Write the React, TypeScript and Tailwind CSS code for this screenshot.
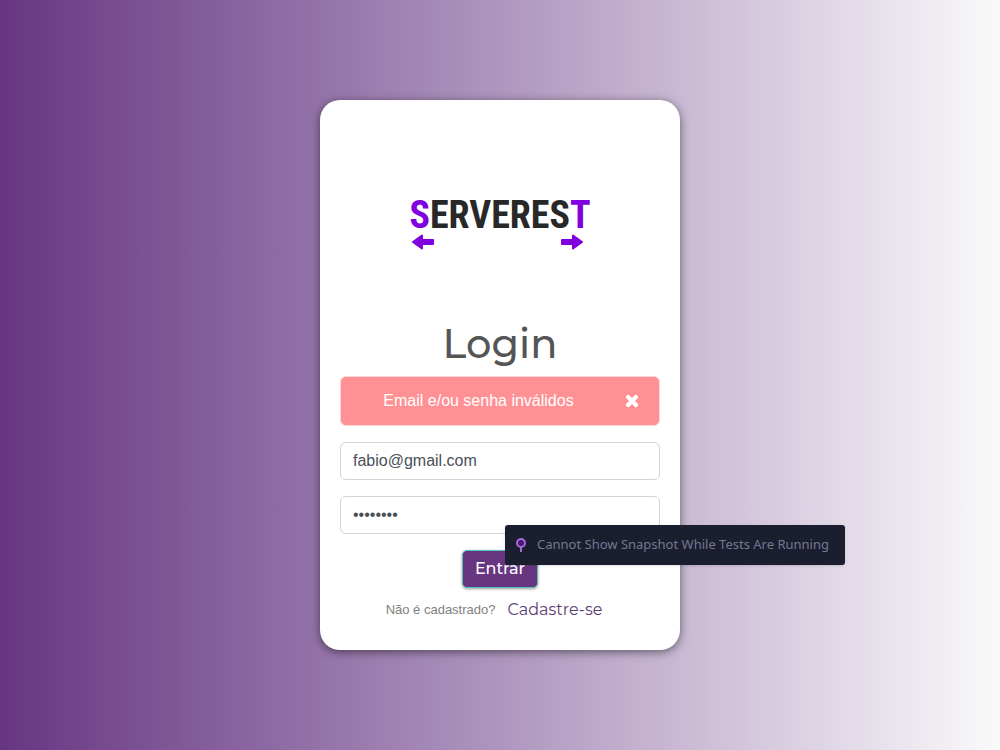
import { useState } from 'react'
import { FaTimes } from 'react-icons/fa'

function Logo() {
  return (
    <svg viewBox="0 0 200 200" className="mx-auto block size-[200px]" role="img" aria-label="ServeRest">
      <text
        x="100"
        y="108"
        textAnchor="middle"
        className="fill-[#282828] font-['Roboto_Condensed','Liberation_Sans_Narrow','Liberation_Sans',sans-serif] text-[38px] font-bold"
      >
        <tspan className="fill-[#8000e0]">S</tspan>ERVERES<tspan className="fill-[#8000e0]">T</tspan>
      </text>
      <g className="fill-[#8000e0] stroke-[#8000e0]" strokeWidth="2" strokeLinejoin="round">
        <path d="M13 122l9-6.500v4.500h11v4H22v4.500z" />
        <path d="M182 122l-9-6.500v4.500h-11v4h11v4.500z" />
      </g>
    </svg>
  )
}

function SnapshotNotice() {
  return (
    <div
      role="status"
      className="absolute top-[425px] left-[185px] flex h-10 items-center gap-[10px] rounded-[3px] bg-[#1b1e2e] pr-4 pl-[10px] font-['Noto_Sans',sans-serif] text-[13px] whitespace-nowrap text-[#747994] shadow-sm"
    >
      <svg viewBox="0 0 12 16" className="h-4 w-3" fill="none" stroke="#a968dc" strokeWidth="2">
        <path d="M6 10v5" />
        <circle cx="6" cy="6" r="4" fill="#4a1a70" />
      </svg>
      Cannot Show Snapshot While Tests Are Running
    </div>
  )
}

const field =
  'mb-4 block h-[38px] w-full rounded-[6px] border border-[#ced4da] bg-white px-3 text-[16px] text-[#495057] outline-none'

export default function App() {
  const [email, setEmail] = useState('fabio@gmail.com')
  const [password, setPassword] = useState('senha123')
  const [error, setError] = useState(true)

  return (
    <main className="flex min-h-screen items-center justify-center bg-linear-to-r from-[#673682] to-[#fafafa] font-['Liberation_Sans',sans-serif]">
      <div className="relative w-[360px] rounded-[20px] bg-white p-5 pb-7 shadow-[0_2px_10px_rgba(0,0,0,0.5)]">
        <form onSubmit={(e) => e.preventDefault()}>
          <Logo />
          <h1 className="mb-2 text-center font-['Montserrat','Inter',sans-serif] text-[40px] leading-[48px] font-medium text-[#555]">
            Login
          </h1>
          {error && (
            <div
              role="alert"
              className="mb-4 flex h-[50px] items-center rounded-[6px] border border-[#ffd6d8] bg-[#ff9194] pr-[19px] text-[16px] text-white"
            >
              <span className="flex-1 pr-2 text-center">Email e/ou senha inválidos</span>
              <button type="button" aria-label="Fechar" onClick={() => setError(false)}>
                <FaTimes size={16} strokeWidth={40} stroke="currentColor" />
              </button>
            </div>
          )}
          <input
            type="email"
            aria-label="Email"
            value={email}
            onChange={(e) => setEmail(e.target.value)}
            className={field}
          />
          <input
            type="password"
            aria-label="Senha"
            value={password}
            onChange={(e) => setPassword(e.target.value)}
            className={field}
          />
          <button
            type="submit"
            className="mx-auto block h-[38px] rounded-[5px] border border-[#4fc3b5] bg-[#683681] px-3 font-['Montserrat','Inter',sans-serif] text-[16px] font-medium text-white shadow-[0_1px_3px_rgba(0,0,0,0.4)]"
          >
            Entrar
          </button>
          <p className="mt-[10px] flex h-6 items-center justify-center gap-3 pr-3 text-[13px] text-[#808080]">
            Não é cadastrado?
            <a
              href="#cadastro"
              className="font-['Montserrat','Inter',sans-serif] text-[16px] text-[#5c3d73]"
            >
              Cadastre-se
            </a>
          </p>
        </form>
        <SnapshotNotice />
      </div>
    </main>
  )
}
